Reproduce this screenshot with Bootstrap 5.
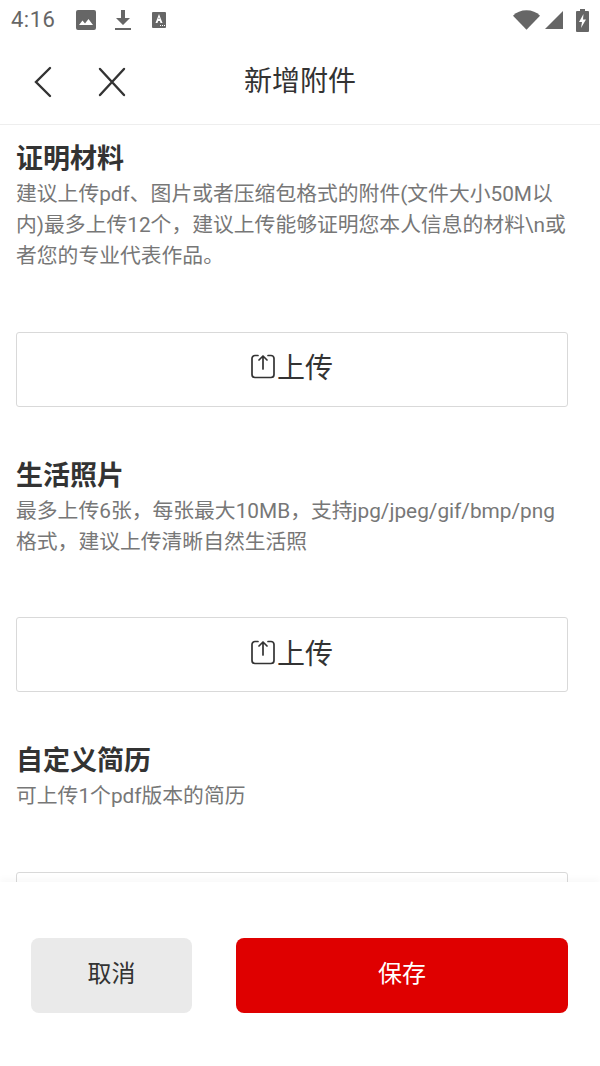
<!DOCTYPE html>
<html lang="zh-CN">
<head>
  <meta charset="UTF-8">
  <meta name="viewport" content="width=device-width, initial-scale=1.0">
  <title>新增附件</title>
  <link rel="stylesheet" href="https://cdn.jsdelivr.net/npm/bootstrap@5.3.0/dist/css/bootstrap.min.css">
  <style>
    html, body { height: 100%; }
    body {
      width: 600px; height: 1066px; overflow: hidden; background: #fff;
      font-family: Roboto, "Noto Sans CJK SC", sans-serif; color: #333;
    }
    .phone { height: 1066px; }
    .status-row { height: 40px; padding: 0 11px 0 11px; color: #666; }
    .status-time { font-size: 22px; line-height: 40px; width: 64px; letter-spacing: .5px; }
    .title-bar { height: 85px; border-bottom: 1px solid #eee; padding-bottom: 1px; }
    .title-text { font-size: 28px; line-height: 36px; color: #333; }
    .nav-icon { position: absolute; top: 26px; }
    .scroll-area { padding: 16px 32px 0 16px; overflow: hidden; }
    .sec-title { font-size: 27px; font-weight: 700; line-height: 36px; color: #333; margin: 0 0 2px; }
    .sec-desc { font-size: 20.8px; line-height: 31px; color: #777; margin: 0; }
    .upload-box {
      height: 75px; border: 1px solid #d9d9d9; border-radius: 3px; background: #fff;
      font-size: 28px; color: #333; width: 100%; padding: 0;
    }
    .upload-icon { margin: 0 2px 5px 0; }
    .box-space { margin-top: 59.5px; margin-bottom: 51px; }
    .footer-bar { position: absolute; left: 0; right: 0; bottom: 0; height: 184px; background: #fff; padding: 56px 32px 0 31px; box-shadow: 0 -4px 6px rgba(0,0,0,.025); }
    .btn-cancel { width: 161px; height: 75px; padding: 0 0 4px; background: #eaeaea; border: 0; border-radius: 8px; font-size: 24px; color: #333; }
    .btn-save { width: 332px; height: 75px; padding: 0 0 4px; background: #df0000; border: 0; border-radius: 8px; font-size: 24px; color: #fff; }
  </style>
</head>

<body>
  <div class="phone position-relative d-flex flex-column">
    <!-- status bar -->
    <div class="status-row d-flex align-items-center">
      <span class="status-time">4:16</span>
      <svg width="22" height="22" viewBox="0 0 22 22"><path fill="#666" d="M3 1h16a2 2 0 0 1 2 2v16a2 2 0 0 1-2 2H3a2 2 0 0 1-2-2V3a2 2 0 0 1 2-2zm1 15h14l-4.500-6-3.500 4.500-2.500-3z" fill-rule="evenodd"/></svg>
      <svg width="18" height="22" viewBox="0 0 18 22" style="margin-left:17px"><path fill="#666" d="M7 1h4v8h5l-7 7-7-7h5zM1 19h16v2H1z"/></svg>
      <svg width="16" height="18" viewBox="0 0 16 18" style="margin-left:19px"><path fill="#666" fill-rule="evenodd" d="M2 1h12a1 1 0 0 1 1 1v14a1 1 0 0 1-1 1H2a1 1 0 0 1-1-1V2a1 1 0 0 1 1-1zm6 2-3.500 9h2l.6-2h1.800l.6 2h2zm0 3.200L8.600 8H7.400zM9 14h1v1H9zm2 0h1v1h-1zm2 0h1v1h-1z"/></svg>
      <div class="ms-auto d-flex align-items-center">
        <svg width="27" height="22" viewBox="0 0 28 22"><path fill="#666" d="M0 6.500C3.500 3 8.500 1 14 1s10.500 2 14 5.500L14 21z"/></svg>
        <svg width="20" height="20" viewBox="0 0 20 20" style="margin-left:4px"><path fill="#666" d="M19 1v18H1z"/></svg>
        <svg width="13" height="23" viewBox="0 0 13 23" style="margin-left:12px"><path fill="#666" fill-rule="evenodd" d="M4 0h5v2h3a1 1 0 0 1 1 1v19a1 1 0 0 1-1 1H1a1 1 0 0 1-1-1V3a1 1 0 0 1 1-1h3zm3.500 5L3 13h3l-1 6 5-8.500H7z"/></svg>
      </div>
    </div>

    <!-- title bar -->
    <div class="title-bar position-relative d-flex align-items-center justify-content-center">
      <svg class="nav-icon" style="left:34px" width="18" height="32" viewBox="0 0 18 32"><path fill="none" stroke="#333" stroke-width="2.400" stroke-linecap="round" d="M16 2 2 16l14 14"/></svg>
      <svg class="nav-icon" style="left:98px" width="28" height="32" viewBox="0 0 28 32"><path fill="none" stroke="#333" stroke-width="2.400" stroke-linecap="round" d="M2 3l24 26M26 3 2 29"/></svg>
      <span class="title-text">新增附件</span>
    </div>

    <!-- content -->
    <div class="scroll-area flex-grow-1">
      <h2 class="sec-title">证明材料</h2>
      <p class="sec-desc">建议上传pdf、图片或者压缩包格式的附件(文件大小50M以内)最多上传12个，建议上传能够证明您本人信息的材料\n或者您的专业代表作品。</p>
      <button class="upload-box box-space d-flex align-items-center justify-content-center">
        <svg class="upload-icon" width="24" height="25" viewBox="0 0 24 25"><path fill="none" stroke="#333" stroke-width="1.700" stroke-linecap="round" stroke-linejoin="round" d="M7 1.500H4a3 3 0 0 0-3 3v16a3 3 0 0 0 3 3h16a3 3 0 0 0 3-3v-16a3 3 0 0 0-3-3h-3M12 15V2M8 6l4-4 4 4"/></svg>
        <span>上传</span>
      </button>

      <h2 class="sec-title">生活照片</h2>
      <p class="sec-desc">最多上传6张，每张最大10MB，支持jpg/jpeg/gif/bmp/png格式，建议上传清晰自然生活照</p>
      <button class="upload-box box-space d-flex align-items-center justify-content-center">
        <svg class="upload-icon" width="24" height="25" viewBox="0 0 24 25"><path fill="none" stroke="#333" stroke-width="1.700" stroke-linecap="round" stroke-linejoin="round" d="M7 1.500H4a3 3 0 0 0-3 3v16a3 3 0 0 0 3 3h16a3 3 0 0 0 3-3v-16a3 3 0 0 0-3-3h-3M12 15V2M8 6l4-4 4 4"/></svg>
        <span>上传</span>
      </button>

      <h2 class="sec-title">自定义简历</h2>
      <p class="sec-desc">可上传1个pdf版本的简历</p>
      <button class="upload-box box-space d-flex align-items-center justify-content-center"></button>
    </div>

    <!-- footer -->
    <div class="footer-bar d-flex justify-content-between align-items-start">
      <button class="btn btn-cancel">取消</button>
      <button class="btn btn-save">保存</button>
    </div>
  </div>

  <script src="https://cdn.jsdelivr.net/npm/bootstrap@5.3.0/dist/js/bootstrap.bundle.min.js"></script>
</body>
</html>
